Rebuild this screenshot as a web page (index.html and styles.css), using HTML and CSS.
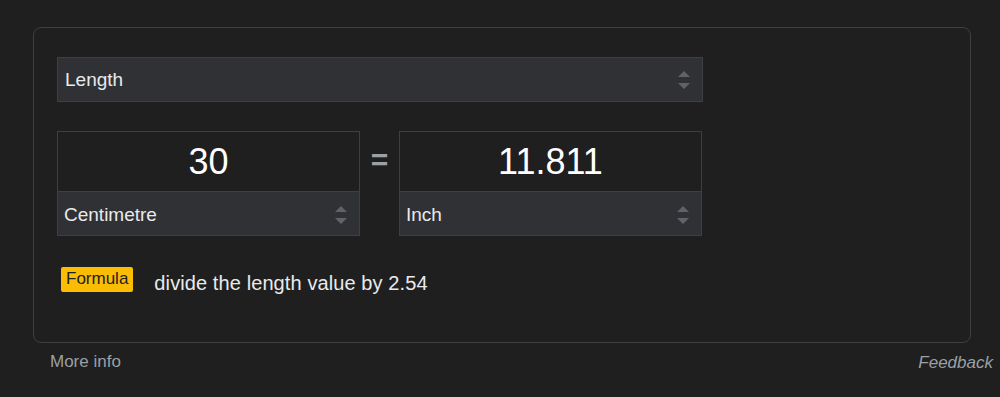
FILE: index.html
```html
<!DOCTYPE html>
<html>
<head>
<meta charset="utf-8">
<link rel="stylesheet" href="styles.css">
</head>
<body>
<div class="wrap">
  <div class="card">
    <div class="select wide">
      <span>Length</span>
      <svg class="arrows" width="12" height="18" viewBox="0 0 12 18"><path d="M0 6L6 0L12 6Z M0 12L12 12L6 18Z" fill="#5f6368"/></svg>
    </div>
    <div class="conv">
      <div class="box">
        <div class="val">30</div>
        <div class="select">
          <span>Centimetre</span>
          <svg class="arrows" width="12" height="18" viewBox="0 0 12 18"><path d="M0 6L6 0L12 6Z M0 12L12 12L6 18Z" fill="#5f6368"/></svg>
        </div>
      </div>
      <div class="eq">=</div>
      <div class="box">
        <div class="val">11.811</div>
        <div class="select">
          <span>Inch</span>
          <svg class="arrows" width="12" height="18" viewBox="0 0 12 18"><path d="M0 6L6 0L12 6Z M0 12L12 12L6 18Z" fill="#5f6368"/></svg>
        </div>
      </div>
    </div>
    <div class="formula">
      <span class="badge">Formula</span>
      <span class="ftext">divide the length value by 2.54</span>
    </div>
  </div>
  <div class="foot">
    <span class="more">More info</span>
    <span class="feedback">Feedback</span>
  </div>
</div>
</body>
</html>
```
FILE: styles.css
```css
html, body {
  margin: 0;
  background: #1f1f1f;
  font-family: "Liberation Sans", Arial, sans-serif;
  color: #e8eaed;
}
.wrap {
  padding-top: 27px;
  padding-left: 33px;
}
.card {
  width: 913px;
  height: 285px;
  border: 1px solid #3c4043;
  border-radius: 8px;
  padding: 29px 0 0 23px;
}
.select {
  box-sizing: border-box;
  height: 45px;
  background: #303134;
  border: 1px solid #3c4043;
  display: flex;
  align-items: center;
  justify-content: space-between;
  padding: 0 12px 0 7px;
  font-size: 19px;
  color: #e8eaed;
}
.select.wide {
  width: 646px;
}
.arrows { display: block; }
.conv {
  display: flex;
  margin-top: 29px;
  align-items: flex-start;
}
.box {
  width: 303px;
  box-sizing: border-box;
  border: 1px solid #3c4043;
  border-bottom: none;
}
.box .select {
  border-left: none;
  border-right: none;
  margin: 0;
  height: 45px;
  padding: 2px 12px 0 6px;
}
.val {
  height: 59px;
  display: flex;
  align-items: center;
  justify-content: center;
  font-size: 36px;
  color: #fff;
  padding-top: 1px;
  box-sizing: border-box;
}
.eq {
  width: 39px;
  text-align: center;
  font-size: 30px;
  color: #9aa0a6;
  padding-top: 12px;
  font-weight: bold;
}
.formula {
  display: flex;
  align-items: center;
  margin-top: 28px;
  padding-left: 4px;
}
.badge {
  background: #fbbc04;
  color: #202124;
  font-size: 17px;
  padding: 2px 5px 3px;
  border-radius: 2px;
  line-height: 20px;
}
.ftext {
  margin-left: 21px;
  font-size: 20px;
  letter-spacing: 0.1px;
  color: #e8eaed;
  padding-top: 8px;
}
.foot {
  display: flex;
  justify-content: space-between;
  padding: 9px 0 0 17px;
  width: 960px;
  box-sizing: border-box;
  font-size: 17px;
  color: #9aa0a6;
}
.feedback {
  font-style: italic;
  padding-top: 1px;
}
```
